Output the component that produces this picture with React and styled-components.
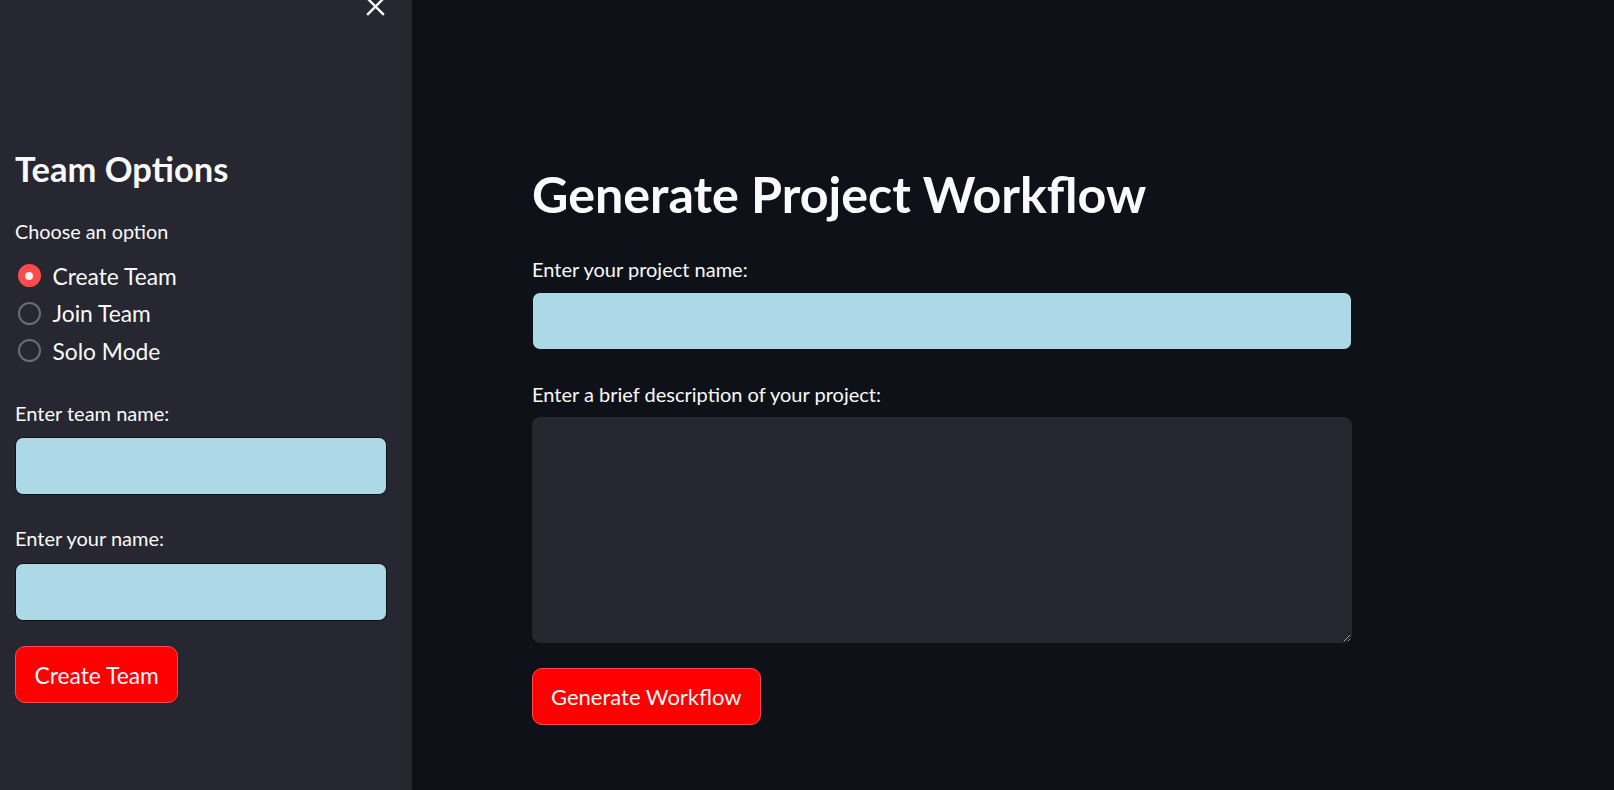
import React, { useState } from "react";
import styled, { createGlobalStyle } from "styled-components";

const GlobalStyle = createGlobalStyle`
  html, body {
    margin: 0;
    padding: 0;
    background: #0e1117;
    overflow: hidden;
  }
  * { box-sizing: border-box; }
  body {
    font-family: Lato, "Open Sans", sans-serif;
    color: #fafafa;
  }
`;

const Page = styled.div`
  display: flex;
  width: 1614px;
  height: 790px;
  background: #0e1117;
`;

const Sidebar = styled.aside`
  width: 412px;
  flex-shrink: 0;
  height: 100%;
  background: #262730;
  padding: 0 25px 0 15px;
  display: flex;
  flex-direction: column;
`;

const SidebarHeader = styled.div`
  height: 16px;
  display: flex;
  justify-content: flex-end;
  padding-right: 2px;
  overflow: hidden;
`;

const CloseButton = styled.button`
  background: none;
  border: none;
  padding: 0;
  margin-top: -3px;
  width: 19px;
  height: 19px;
  color: #fafafa;
  cursor: pointer;
  display: block;
`;

const SideTitle = styled.h2`
  margin: 133px 0 0;
  font-size: 34.5px;
  line-height: 40px;
  font-weight: 700;
  color: #fafafa;
`;

const Label = styled.label`
  display: block;
  margin-top: ${(p) => p.$mt}px;
  font-size: ${(p) => p.$size || 20}px;
  line-height: 24px;
  color: #fafafa;
`;

const RadioGroup = styled.div`
  margin-top: 14px;
  display: flex;
  flex-direction: column;
`;

const RadioRow = styled.label`
  height: 37.5px;
  display: flex;
  align-items: center;
  gap: 12px;
  padding-left: 2.5px;
  cursor: pointer;
  font-size: 22.8px;
  color: #fafafa;
`;

const RadioDot = styled.span`
  width: 23px;
  height: 23px;
  border-radius: 50%;
  flex-shrink: 0;
  display: flex;
  align-items: center;
  justify-content: center;
  background: ${(p) => (p.$checked ? "#ff4b4b" : "transparent")};
  border: 2px solid ${(p) => (p.$checked ? "#ff4b4b" : "#6b6c73")};
  &::after {
    content: "";
    display: ${(p) => (p.$checked ? "block" : "none")};
    width: 8px;
    height: 8px;
    border-radius: 50%;
    background: #f0f2f6;
  }
`;

const TextInput = styled.input`
  display: block;
  width: 100%;
  height: 58px;
  margin-top: ${(p) => p.$mt}px;
  background: #add8e6;
  border: 1px solid ${(p) => p.$border || "#0e1117"};
  border-radius: 8px;
  outline: none;
  padding: 0 16px;
  font-family: inherit;
  font-size: 20px;
  color: #0e1117;
`;

const RedButton = styled.button`
  margin-top: 25px;
  align-self: flex-start;
  height: 57px;
  padding: 0 ${(p) => p.$pad || 18}px;
  background: #ff0000;
  border: 1px solid #ff4b4b;
  border-radius: 10px;
  color: #fafafa;
  font-family: inherit;
  font-size: ${(p) => p.$size || 22}px;
  cursor: pointer;
`;

const Main = styled.main`
  flex: 1;
  padding: 162px 0 0 120px;
`;

const Content = styled.div`
  width: 820px;
  display: flex;
  flex-direction: column;
`;

const Title = styled.h1`
  margin: 0;
  font-size: 50.2px;
  line-height: 64px;
  font-weight: 700;
  color: #fafafa;
`;

const TextArea = styled.textarea`
  display: block;
  width: 100%;
  height: 226px;
  margin-top: 11px;
  background: #262730;
  border: 1px solid #262730;
  border-radius: 8px;
  outline: none;
  padding: 16px;
  resize: vertical;
  color-scheme: dark;
  font-family: inherit;
  font-size: 20px;
  color: #fafafa;
`;

const options = ["Create Team", "Join Team", "Solo Mode"];

export default function App() {
  const [choice, setChoice] = useState("Create Team");
  return (
    <>
      <GlobalStyle />
      <Page>
        <Sidebar>
          <SidebarHeader>
            <CloseButton aria-label="Close sidebar">
              <svg viewBox="0 0 19 19" width="19" height="19" fill="none" stroke="currentColor" strokeWidth="2.4" strokeLinecap="square">
                <line x1="2" y1="2" x2="17" y2="17" />
                <line x1="17" y1="2" x2="2" y2="17" />
              </svg>
            </CloseButton>
          </SidebarHeader>
          <SideTitle>Team Options</SideTitle>
          <Label $mt={30} $size={19.8}>Choose an option</Label>
          <RadioGroup>
            {options.map((o) => (
              <RadioRow key={o} onClick={() => setChoice(o)}>
                <RadioDot $checked={choice === o} />
                {o}
              </RadioRow>
            ))}
          </RadioGroup>
          <Label $mt={31.5}>Enter team name:</Label>
          <TextInput $mt={12} />
          <Label $mt={31}>Enter your name:</Label>
          <TextInput $mt={13} />
          <RedButton $pad={18.5} $size={22.8}>Create Team</RedButton>
        </Sidebar>
        <Main>
          <Content>
            <Title>Generate Project Workflow</Title>
            <Label $mt={31}>Enter your project name:</Label>
            <TextInput $mt={11} />
            <Label $mt={32}>Enter a brief description of your project:</Label>
            <TextArea />
            <RedButton $pad={18}>Generate Workflow</RedButton>
          </Content>
        </Main>
      </Page>
    </>
  );
}
